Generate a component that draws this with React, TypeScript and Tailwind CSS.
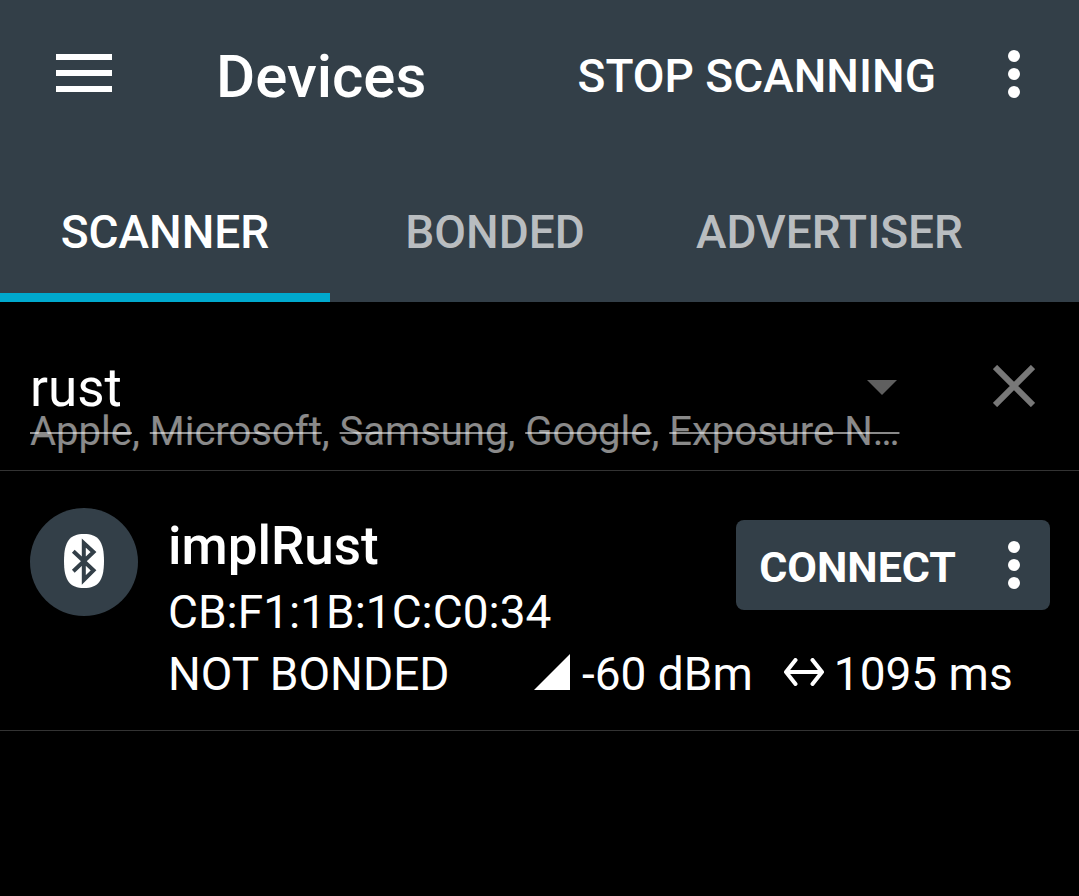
import { useState } from "react";

const tabs = ["SCANNER", "BONDED", "ADVERTISER"];
const excluded = ["Apple", "Microsoft", "Samsung", "Google", "Exposure N…"];

function MoreIcon() {
  return (
    <svg width="12" height="48" viewBox="0 0 12 48" fill="currentColor" aria-hidden="true">
      <circle cx="6" cy="6" r="6" />
      <circle cx="6" cy="24" r="6" />
      <circle cx="6" cy="42" r="6" />
    </svg>
  );
}

function MenuIcon() {
  return (
    <svg width="56" height="38" viewBox="0 0 56 38" fill="currentColor" aria-hidden="true">
      <path d="M0 0h56v6H0zM0 16h56v6H0zM0 32h56v6H0z" />
    </svg>
  );
}

function BluetoothBadge() {
  return (
    <svg className="shrink-0" width="108" height="108" viewBox="0 0 108 108" aria-hidden="true">
      <circle cx="54" cy="54" r="54" fill="#333f48" />
      <path
        d="M54 26C68 26 74 33 74 53S68 80 54 80 34 73 34 53 40 26 54 26z"
        fill="#fff"
      />
      <path
        d="M43.3 43.3L63.5 62.4 53.8 72V35L63.5 44 43.3 63.2"
        fill="none"
        stroke="#333f48"
        strokeWidth="4"
      />
    </svg>
  );
}

function Header() {
  const [active, setActive] = useState("SCANNER");
  return (
    <header className="bg-[#333f48]">
      <div className="flex h-[158px] items-center pb-[11px] pl-14 pr-[59px]">
        <button type="button" aria-label="Open menu" className="pb-0.5">
          <MenuIcon />
        </button>
        <h1 className="ml-[104px] flex-1 pt-1.5 text-[60px] font-medium leading-[72px]">Devices</h1>
        <button type="button" className="pt-1 text-[46px] font-medium leading-[60px]">
          STOP SCANNING
        </button>
        <button type="button" aria-label="More options" className="ml-[72px]">
          <MoreIcon />
        </button>
      </div>
      <div role="tablist" className="flex h-36">
        {tabs.map((tab) => (
          <button
            key={tab}
            type="button"
            role="tab"
            aria-selected={tab === active}
            onClick={() => setActive(tab)}
            className={
              tab === active
                ? "min-w-[330px] border-b-9 border-[#00a9ce] px-9 pt-[14px] text-[46px] font-medium text-white"
                : "min-w-[330px] border-b-9 border-transparent px-9 pt-[14px] text-[46px] font-medium text-[#b9bdc0]"
            }
          >
            {tab}
          </button>
        ))}
      </div>
    </header>
  );
}

function FilterBar() {
  return (
    <section className="flex items-start justify-between border-b border-[#333333] pb-[19px] pl-[30px] pr-11 pt-[62px]">
      <button type="button" className="text-left">
        <span className="flex items-center justify-between pr-0.5">
          <span className="text-[53px] leading-[48px]">rust</span>
          <svg className="mb-0.5" width="30" height="15" viewBox="0 0 30 15" fill="#5f5f5f" aria-hidden="true">
            <path d="M0 0h30L15 15z" />
          </svg>
        </span>
        <span className="block whitespace-nowrap text-[40px] leading-[39px] text-white/54">
          {excluded.map((name, i) => (
            <span key={name}>
              {i > 0 && ", "}
              <s className="decoration-2">{name}</s>
            </span>
          ))}
        </span>
      </button>
      <button type="button" aria-label="Clear filter" className="pt-px">
        <svg width="42" height="42" viewBox="0 0 42 42" stroke="#787878" strokeWidth="6" aria-hidden="true">
          <path d="M2 2l38 38M40 2L2 40" />
        </svg>
      </button>
    </section>
  );
}

function DeviceRow() {
  return (
    <article className="flex gap-[30px] border-b border-[#333333] pb-[25px] pl-[30px] pr-[29px] pt-[37px]">
      <BluetoothBadge />
      <div className="flex-1">
        <div className="flex items-start justify-between">
          <div>
            <h2 className="pt-1 text-[53px] font-medium leading-[68px]">implRust</h2>
            <p className="pt-px text-[46px] leading-[62px]">CB:F1:1B:1C:C0:34</p>
          </div>
          <div className="mt-3 flex h-[90px] items-center rounded-lg bg-[#333f48]">
            <button type="button" className="h-full pl-[23px] pt-1 text-[43px] font-bold">
              CONNECT
            </button>
            <button type="button" aria-label="Device options" className="h-full pl-[52px] pr-[30px]">
              <MoreIcon />
            </button>
          </div>
        </div>
        <div className="flex items-center whitespace-nowrap text-[46px] leading-[62px]">
          <span className="w-[366px]">NOT BONDED</span>
          <svg className="mb-1" width="36" height="36" viewBox="0 0 36 36" fill="currentColor" aria-hidden="true">
            <path d="M36 0v36H0z" />
          </svg>
          <span className="ml-3">-60 dBm</span>
          <svg
            className="mb-1 ml-[31px]"
            width="40"
            height="28"
            viewBox="0 0 40 28"
            fill="none"
            stroke="currentColor"
            strokeWidth="4"
            strokeLinecap="round"
            strokeLinejoin="round"
            aria-hidden="true"
          >
            <path d="M11.5 2L2 14l9.5 12M28.5 2L38 14l-9.5 12M2 14h36" />
          </svg>
          <span className="ml-[10px]">1095 ms</span>
        </div>
      </div>
    </article>
  );
}

export default function App() {
  return (
    <div className="min-h-screen bg-black font-['Roboto',sans-serif] text-white">
      <Header />
      <main>
        <FilterBar />
        <DeviceRow />
      </main>
    </div>
  );
}
